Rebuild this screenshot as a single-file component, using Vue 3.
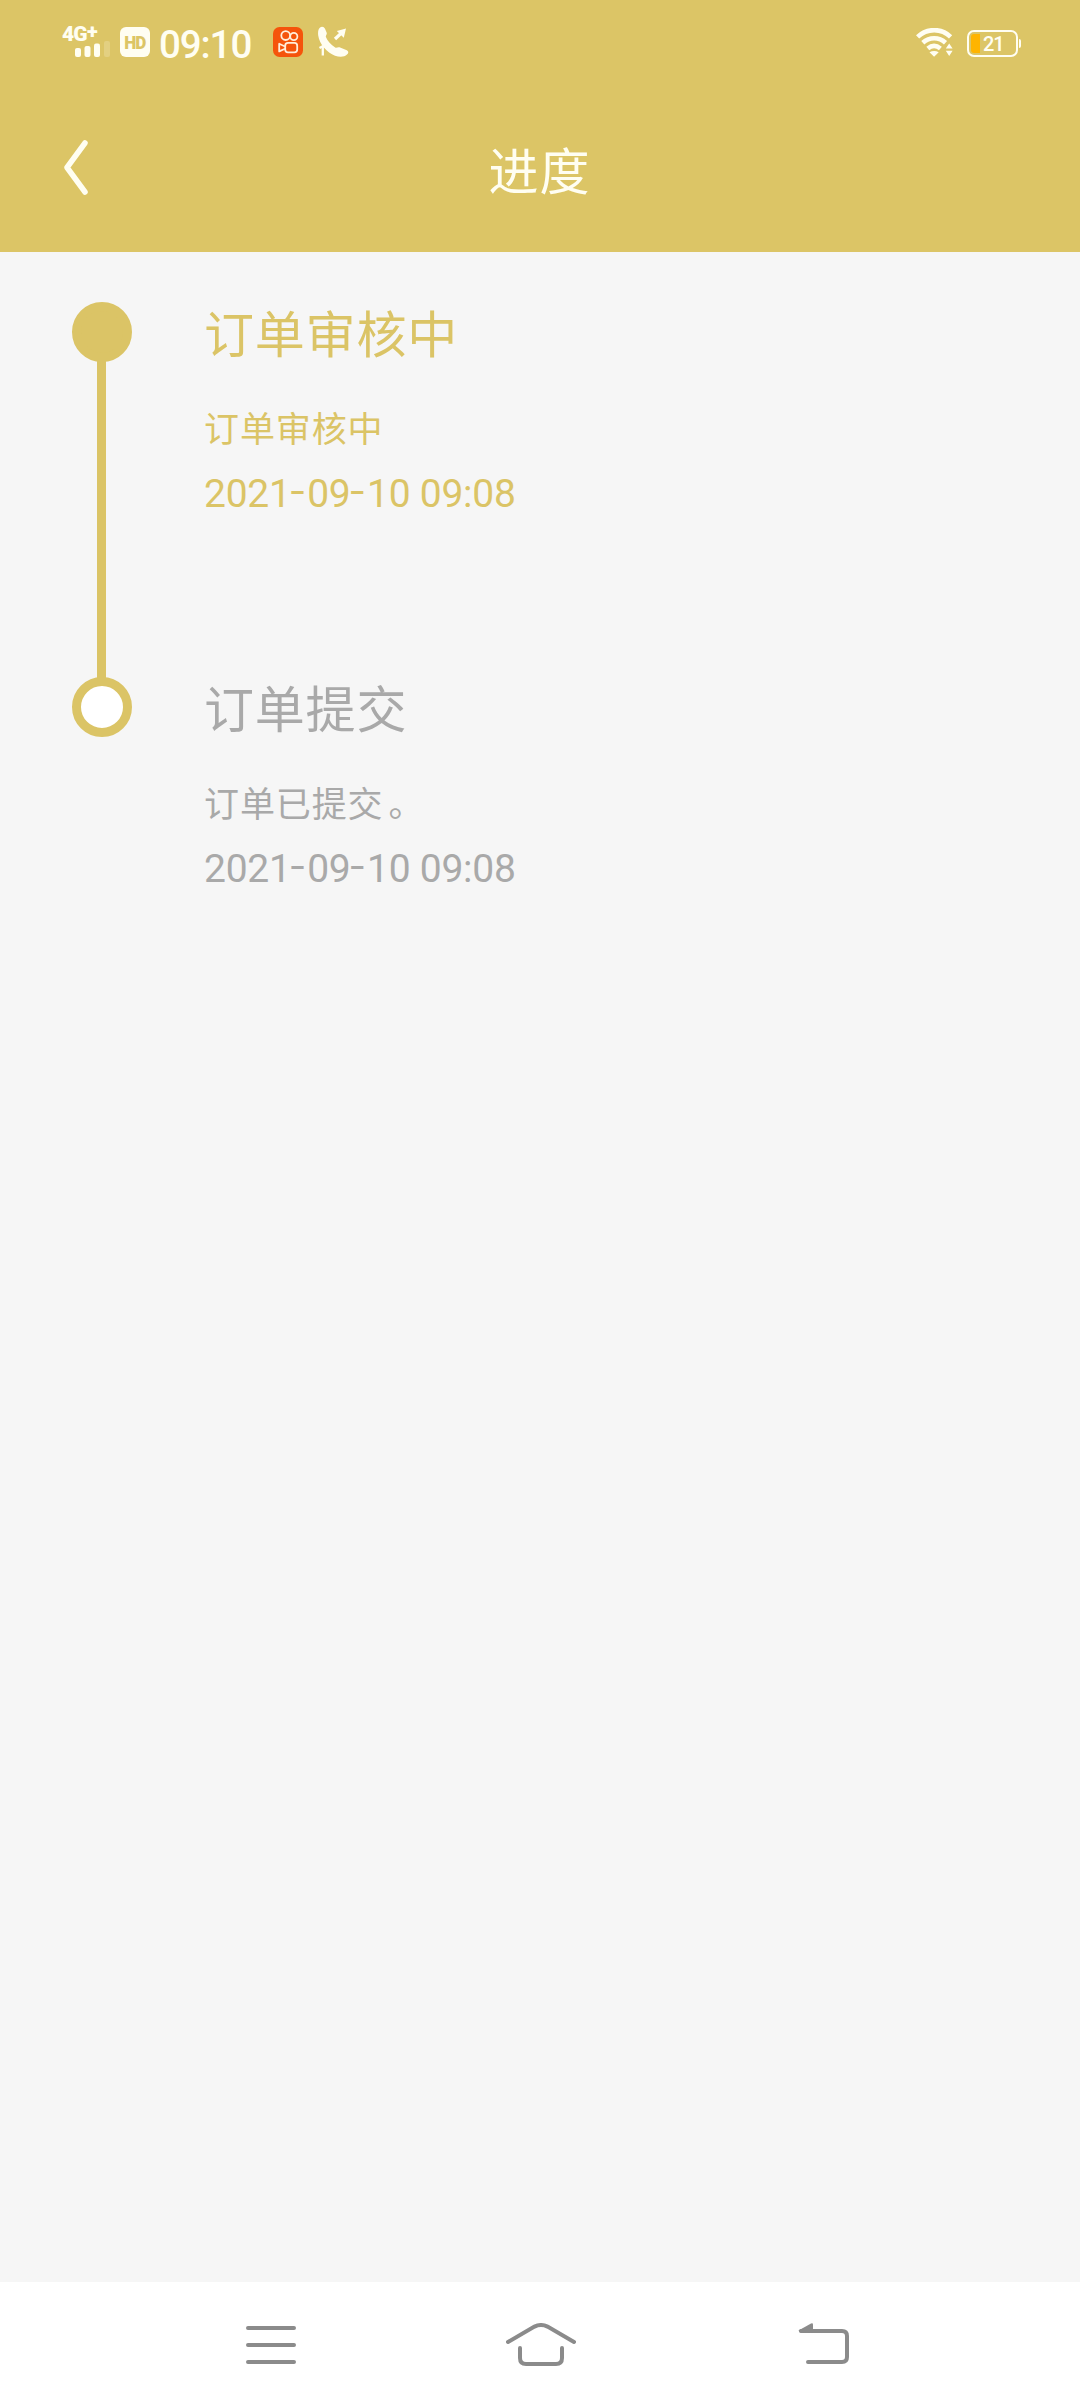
<script setup>
const steps = [
  { title: '订单审核中', desc: '订单审核中', time: '2021-09-10 09:08', current: true },
  { title: '订单提交', desc: '订单已提交。', time: '2021-09-10 09:08', current: false },
]
const timeParts = (time) => time.split(/(-)/)
const descParts = (desc) => desc.split(/(。)/).filter(Boolean)
</script>

<template>
  <div class="screen">
    <header class="header">
      <div class="status">
        <div class="network">
          <span class="net-label">4G<sup>+</sup></span>
          <svg class="bars" width="36" height="17" viewBox="0 0 36 17" fill="#fffef2">
            <rect x="0" y="8" width="6" height="9" rx="2" />
            <rect x="9.500" y="6" width="6" height="11" rx="2" />
            <rect x="19" y="3.500" width="6" height="13.500" rx="2" />
            <rect x="29" y="1" width="6" height="16" rx="2" opacity=".2" />
          </svg>
        </div>
        <span class="hd"><b>HD</b></span>
        <span class="clock">09:10</span>
        <svg class="app-icon" width="30" height="30" viewBox="0 0 30 30">
          <rect width="30" height="30" rx="6.500" fill="#f5540b" />
          <g fill="none" stroke="#ffeeda" stroke-width="1.800">
            <circle cx="12.700" cy="8.600" r="4.400" />
            <circle cx="20.800" cy="9.500" r="3.600" />
            <rect x="12.200" y="15.900" width="12" height="9.400" rx="2.800" />
            <path d="M12 19.500 6.200 16.800V24.400L12 21.700" stroke-linejoin="round" />
          </g>
        </svg>
        <svg class="call" width="31" height="32" viewBox="0 0 31 32" fill="#fffef2">
          <path d="M1.800 1.800C3.800-.1 6 .7 7 2.800L8.700 6.800C9.200 8.500 7.400 9.600 7.900 11C9.500 15 13 19 17.200 21.500C18.800 22.300 19.900 20.600 21.500 21.300L28.800 24.200C30.800 25.300 30.700 26.800 29 28.500C26.500 31 22 31.400 17 29.700C9 26.500 1.500 18.500.2 9.500C-.2 6 .2 3.500 1.800 1.800Z" />
          <path d="M17 13 24.500 6" stroke="#fffef2" stroke-width="3.200" fill="none" />
          <path d="M18.800 4.900 28 2.600 25.800 11.800Z" />
          <path d="M1.500 22 4.800 20.200V29.500" stroke="#fffef2" stroke-width="2.300" fill="none" />
        </svg>
        <svg class="wifi" width="37" height="30" viewBox="0 0 37 30">
          <g fill="none" stroke="#fffef2" stroke-width="4.600">
            <path d="M1.600 8.800C11-.1 25.500-.1 34.600 8.800" />
            <path d="M6.800 14.700C13.500 8.700 23 8.700 29.500 14.700" />
            <path d="M11.800 20.500C15.800 17.200 20.300 17.200 24.400 20.500" />
          </g>
          <path d="M13.500 24.300C16.500 22.400 19.700 22.400 22.700 24.300L18.100 28.700Z" fill="#fffef2" />
          <path d="M29.800 20.600 33.200 15.500 36.600 20.600ZM29.800 22.800 33.200 27.900 36.600 22.800Z" fill="#fffef2" />
        </svg>
        <div class="battery">
          <i class="charge"></i>
          <span class="level">21</span>
        </div>
        <i class="battery-cap"></i>
      </div>
      <div class="titlebar">
        <svg class="back" width="26" height="56" viewBox="0 0 26 56" fill="none">
          <path d="M22 3 4 27.500 22 52" stroke="#fffef2" stroke-width="5.500" stroke-linecap="round" stroke-linejoin="round" />
        </svg>
        <h1 class="title">进度</h1>
      </div>
    </header>

    <main class="timeline">
      <section v-for="(s, i) in steps" :key="i" class="step" :class="{ current: s.current }">
        <div class="rail">
          <span class="dot"></span>
          <span v-if="i < steps.length - 1" class="line"></span>
        </div>
        <div class="info">
          <h2>{{ s.title }}</h2>
          <p class="desc"><span v-for="(part, k) in descParts(s.desc)" :key="k" :class="{ stop: part === '。' }">{{ part }}</span></p>
          <p class="time"><span v-for="(part, k) in timeParts(s.time)" :key="k" :class="{ dash: part === '-' }">{{ part }}</span></p>
        </div>
      </section>
    </main>

    <nav class="navbar">
      <svg width="50" height="44" viewBox="0 0 50 44" fill="none" stroke="#8b8b8b" stroke-width="4" stroke-linecap="round">
        <path d="M2 5H48M2 22H48M2 39H48" />
      </svg>
      <svg class="home" width="70" height="44" viewBox="0 0 70 44" fill="none" stroke="#8b8b8b" stroke-width="4" stroke-linecap="round">
        <path d="M2 19 28.500 3.600Q35 .4 41.500 3.600L68 19" />
        <path d="M14 25V35Q14 41 20 41H50Q56 41 56 35V25" />
      </svg>
      <svg class="return" width="51" height="44" viewBox="0 0 51 44" fill="none" stroke="#8b8b8b" stroke-width="4" stroke-linecap="round">
        <path d="M3 8H44Q49 8 49 13V34Q49 39 44 39H10" />
        <path d="M.5 7.500 13 .4Q15-.4 15 1.500V9L2 9.500Z" fill="#8b8b8b" stroke="none" />
      </svg>
    </nav>
  </div>
</template>

<style>
body { margin: 0; }
</style>

<style scoped>
.screen {
  width: 1080px;
  height: 2408px;
  display: flex;
  flex-direction: column;
  background: #f6f6f6;
  font-family: Roboto, "Noto Sans CJK SC", sans-serif;
}
.header {
  height: 252px;
  background: #dcc566;
  color: #fffef2;
}
.status {
  height: 84px;
  display: flex;
  align-items: flex-start;
  padding: 0 59px 0 62px;
  box-sizing: border-box;
}
.network {
  width: 58px;
  padding-top: 25px;
  display: flex;
  flex-direction: column;
}
.net-label {
  font-size: 21px;
  line-height: 19px;
  height: 15px;
  font-weight: 900;
  letter-spacing: -.8px;
}
.net-label sup {
  font-size: 20px;
  line-height: 0;
  vertical-align: 3px;
}
.bars { margin-left: 13px; }
.hd {
  width: 30px;
  height: 30px;
  margin-top: 27px;
  border-radius: 6px;
  background: #fffef2;
  color: #dcc566;
  display: flex;
  justify-content: center;
  font-size: 19px;
  line-height: 31px;
}
.hd b {
  font-weight: 900;
  letter-spacing: -1px;
  transform: scaleX(.9);
}
.clock {
  width: 114px;
  margin-left: 9px;
  padding-top: 20px;
  font-size: 38.500px;
  line-height: 49px;
  font-weight: 500;
  letter-spacing: -1.100px;
}
.app-icon { margin-top: 27px; }
.call { margin: 26px 0 0 15px; }
.wifi { margin: 28px 0 0 auto; }
.battery {
  width: 51px;
  height: 27px;
  margin: 30px 0 0 14px;
  box-sizing: border-box;
  border: 2.500px solid #fffef2;
  border-radius: 7px;
  display: flex;
  align-items: center;
  padding-left: 2px;
}
.charge {
  width: 9px;
  height: 19px;
  border-radius: 3px 0 0 3px;
  background: #ffb400;
}
.level {
  margin-left: 3px;
  font-size: 20px;
  line-height: 22px;
  font-weight: 500;
  letter-spacing: -1px;
}
.battery-cap {
  width: 2px;
  height: 9px;
  margin: 39px 0 0 1px;
  border-radius: 0 2px 2px 0;
  background: #fffef2;
}
.titlebar {
  display: grid;
  grid-template-columns: 26px 1fr 26px;
  padding: 0 61px 0 63px;
}
.back { margin-top: 56px; }
.title {
  margin: 52px 0 0 -3px;
  font-size: 50px;
  line-height: 74px;
  font-weight: 400;
  letter-spacing: 1px;
  text-align: center;
}
.timeline {
  flex: 1;
  padding: 50px 72px 0;
}
.step {
  display: flex;
  height: 375px;
  color: #a9a9a9;
}
.rail {
  width: 60px;
  display: flex;
  flex-direction: column;
  align-items: center;
}
.dot {
  width: 60px;
  height: 60px;
  box-sizing: border-box;
  flex: none;
  border: 9px solid #dbc466;
  border-radius: 50%;
  background: #fff;
}
.line {
  width: 9px;
  flex: 1;
  margin: -1px 1px -1px 0;
  background: #dbc466;
}
.info { margin-left: 72px; }
h2, p { margin: 0; font-weight: 400; }
h2 {
  margin-top: -3px;
  font-size: 50px;
  line-height: 74px;
  letter-spacing: .8px;
}
.desc {
  margin-top: 32px;
  font-size: 35px;
  line-height: 52px;
  letter-spacing: .9px;
}
.stop { margin-left: 5px; }
.time {
  margin-top: 13px;
  font-size: 39px;
  line-height: 48px;
  letter-spacing: -.25px;
}
.dash {
  margin: 0 1.500px 0 -2px;
  font-family: Inter, sans-serif;
  font-size: 38px;
  line-height: 0;
  vertical-align: 3px;
  letter-spacing: -.5px;
}
.current { color: #dbc466; }
.current .dot { background: #dbc466; }
.navbar {
  height: 126px;
  display: flex;
  align-items: flex-start;
  padding: 41px 230px 0 246px;
  box-sizing: border-box;
  background: #fff;
}
.home { margin-left: 210px; }
.return { margin-left: 222px; }
</style>
